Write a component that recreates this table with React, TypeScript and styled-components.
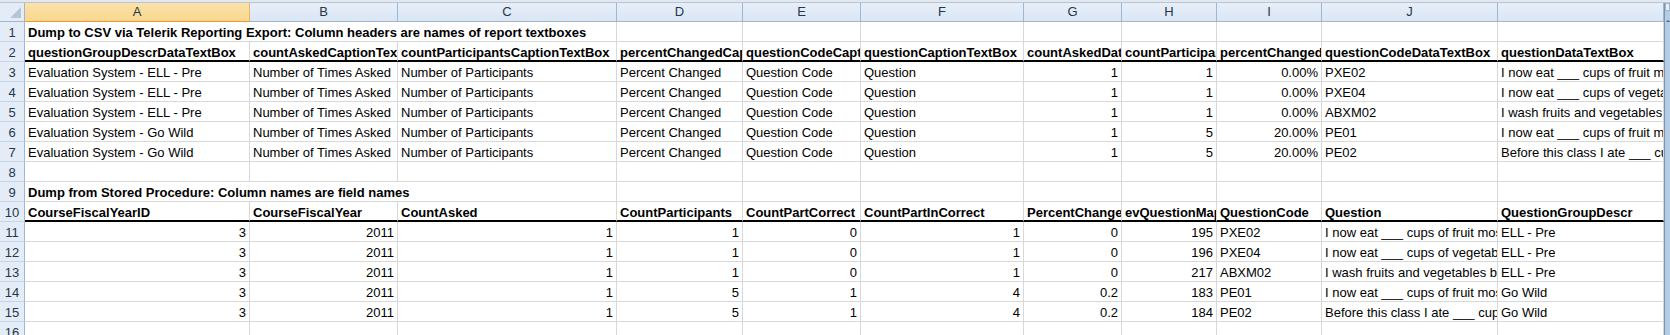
import React from 'react';
import styled, { createGlobalStyle } from 'styled-components';

const GlobalStyle = createGlobalStyle`
  html, body {
    margin: 0;
    padding: 0;
    background: #ffffff;
    overflow: hidden;
  }
  body {
    font-family: 'Liberation Sans', Arial, sans-serif;
  }
`;

// column widths of A..K, the row header column comes first
const COL_WIDTHS = [225, 148, 219, 126, 118, 163, 98, 95, 105, 176, 166];
const COL_LETTERS = ['A', 'B', 'C', 'D', 'E', 'F', 'G', 'H', 'I', 'J', ''];

type CellDef = string | { v: string; span: number };

interface RowDef {
  n: number;
  bold?: boolean;
  thick?: boolean;
  cells: CellDef[];
}

const rows: RowDef[] = [
  {
    n: 1,
    bold: true,
    cells: [{ v: 'Dump to CSV via Telerik Reporting Export: Column headers are names of report textboxes', span: 3 }, '', '', '', '', '', '', '', ''],
  },
  {
    n: 2,
    bold: true,
    thick: true,
    cells: [
      'questionGroupDescrDataTextBox',
      'countAskedCaptionTextBox',
      'countParticipantsCaptionTextBox',
      'percentChangedCaptionTextBox',
      'questionCodeCaptionTextBox',
      'questionCaptionTextBox',
      'countAskedDataTextBox',
      'countParticipantsDataTextBox',
      'percentChangedDataTextBox',
      'questionCodeDataTextBox',
      'questionDataTextBox',
    ],
  },
  {
    n: 3,
    cells: ['Evaluation System - ELL - Pre', 'Number of Times Asked', 'Number of Participants', 'Percent Changed', 'Question Code', 'Question', '1', '1', '0.00%', 'PXE02', 'I now eat ___ cups of fruit most days'],
  },
  {
    n: 4,
    cells: ['Evaluation System - ELL - Pre', 'Number of Times Asked', 'Number of Participants', 'Percent Changed', 'Question Code', 'Question', '1', '1', '0.00%', 'PXE04', 'I now eat ___ cups of vegetables most days'],
  },
  {
    n: 5,
    cells: ['Evaluation System - ELL - Pre', 'Number of Times Asked', 'Number of Participants', 'Percent Changed', 'Question Code', 'Question', '1', '1', '0.00%', 'ABXM02', 'I wash fruits and vegetables before eating'],
  },
  {
    n: 6,
    cells: ['Evaluation System - Go Wild', 'Number of Times Asked', 'Number of Participants', 'Percent Changed', 'Question Code', 'Question', '1', '5', '20.00%', 'PE01', 'I now eat ___ cups of fruit most days'],
  },
  {
    n: 7,
    cells: ['Evaluation System - Go Wild', 'Number of Times Asked', 'Number of Participants', 'Percent Changed', 'Question Code', 'Question', '1', '5', '20.00%', 'PE02', 'Before this class I ate ___ cups of fruit'],
  },
  { n: 8, cells: ['', '', '', '', '', '', '', '', '', '', ''] },
  {
    n: 9,
    bold: true,
    cells: [{ v: 'Dump from Stored Procedure: Column names are field names', span: 3 }, '', '', '', '', '', '', '', ''],
  },
  {
    n: 10,
    bold: true,
    thick: true,
    cells: [
      'CourseFiscalYearID',
      'CourseFiscalYear',
      'CountAsked',
      'CountParticipants',
      'CountPartCorrect',
      'CountPartInCorrect',
      'PercentChange',
      'evQuestionMapID',
      'QuestionCode',
      'Question',
      'QuestionGroupDescr',
    ],
  },
  {
    n: 11,
    cells: ['3', '2011', '1', '1', '0', '1', '0', '195', 'PXE02', 'I now eat ___ cups of fruit most days', 'ELL - Pre'],
  },
  {
    n: 12,
    cells: ['3', '2011', '1', '1', '0', '1', '0', '196', 'PXE04', 'I now eat ___ cups of vegetables most days', 'ELL - Pre'],
  },
  {
    n: 13,
    cells: ['3', '2011', '1', '1', '0', '1', '0', '217', 'ABXM02', 'I wash fruits and vegetables before eating', 'ELL - Pre'],
  },
  {
    n: 14,
    cells: ['3', '2011', '1', '5', '1', '4', '0.2', '183', 'PE01', 'I now eat ___ cups of fruit most days', 'Go Wild'],
  },
  {
    n: 15,
    cells: ['3', '2011', '1', '5', '1', '4', '0.2', '184', 'PE02', 'Before this class I ate ___ cups of fruit', 'Go Wild'],
  },
  { n: 16, cells: ['', '', '', '', '', '', '', '', '', '', ''] },
];

const isNumber = (v: string) => /^[\d.]+%?$/.test(v);

const Window = styled.div`
  display: flex;
  flex-direction: column;
  width: 1670px;
  height: 335px;
  overflow: hidden;
  background: #ffffff;
`;

const TopStrip = styled.div`
  height: 3px;
  box-sizing: border-box;
  background: #e3e8ef;
  border-bottom: 1px solid #b7c5d7;
`;

const Body = styled.div`
  display: flex;
  flex: 1;
  min-height: 0;
`;

const Sheet = styled.div`
  display: grid;
  grid-template-columns: 25px ${COL_WIDTHS.map((w) => `${w}px`).join(' ')};
  grid-template-rows: 19px;
  grid-auto-rows: 20px;
  align-content: start;
  overflow: hidden;
  width: 1664px;
`;

const Corner = styled.div`
  position: relative;
  box-sizing: border-box;
  background: #e4ecf7;
  border-right: 1px solid #9eb6ce;
  border-bottom: 1px solid #9eb6ce;

  svg {
    position: absolute;
    right: 3px;
    bottom: 3px;
  }
`;

const ColHead = styled.div<{ $active?: boolean }>`
  box-sizing: border-box;
  border-right: 1px solid ${(p) => (p.$active ? '#e8b860' : '#9eb6ce')};
  border-bottom: 1px solid ${(p) => (p.$active ? '#f29536' : '#9eb6ce')};
  background: ${(p) =>
    p.$active ? 'linear-gradient(#fbe2a8, #f8d88f)' : 'linear-gradient(#e6eef8, #dbe6f4)'};
  color: #27364a;
  font-size: 13px;
  line-height: 18px;
  text-align: center;
`;

const RowHead = styled.div`
  box-sizing: border-box;
  background: #e4ecf7;
  border-right: 1px solid #9eb6ce;
  border-bottom: 1px solid #c5d5e9;
  color: #27364a;
  font-size: 13px;
  line-height: 19px;
  padding-top: 1px;
  text-align: center;
`;

const Cell = styled.div<{ $right?: boolean; $bold?: boolean; $thick?: boolean; $span: number }>`
  grid-column: span ${(p) => p.$span};
  box-sizing: border-box;
  border-right: 1px solid #d8d8d8;
  border-bottom: ${(p) => (p.$thick ? '2px solid #000000' : '1px solid #d8d8d8')};
  padding: 1px 3px 0 3px;
  font-size: 13px;
  line-height: 19px;
  font-weight: ${(p) => (p.$bold ? 700 : 400)};
  text-align: ${(p) => (p.$right ? 'right' : 'left')};
  color: #000000;
  white-space: nowrap;
  overflow: hidden;
`;

const VScroll = styled.div`
  display: flex;
  flex-direction: column;
  align-items: center;
  width: 6px;
  box-sizing: border-box;
  background: #b5cce7;
  border-left: 1px solid #7c94b4;
`;

const SplitBox = styled.div`
  width: 5px;
  height: 8px;
  box-sizing: border-box;
  background: #e9eff7;
  border: 1px solid #9eb6ce;
`;

const ScrollArrow = styled.div`
  margin-top: 9px;
  width: 0;
  height: 0;
  border-left: 2px solid transparent;
  border-right: 2px solid transparent;
  border-bottom: 2px solid #4d6185;
`;

const App: React.FC = () => {
  return (
    <Window>
      <GlobalStyle />
      <TopStrip />
      <Body>
        <Sheet>
          <Corner>
            <svg width="11" height="11" viewBox="0 0 11 11">
              <polygon points="11,0 11,11 0,11" fill="#b6c4d6" />
            </svg>
          </Corner>
          {COL_LETTERS.map((l, i) => (
            <ColHead key={i} $active={i === 0}>
              {l}
            </ColHead>
          ))}
          {rows.map((row) => (
            <React.Fragment key={row.n}>
              <RowHead>{row.n}</RowHead>
              {row.cells.map((c, i) => {
                const v = typeof c === 'string' ? c : c.v;
                const span = typeof c === 'string' ? 1 : c.span;
                return (
                  <Cell
                    key={i}
                    $span={span}
                    $bold={row.bold}
                    $thick={row.thick}
                    $right={isNumber(v)}
                  >
                    {v}
                  </Cell>
                );
              })}
            </React.Fragment>
          ))}
        </Sheet>
        <VScroll>
          <SplitBox />
          <ScrollArrow />
        </VScroll>
      </Body>
    </Window>
  );
};

export default App;
